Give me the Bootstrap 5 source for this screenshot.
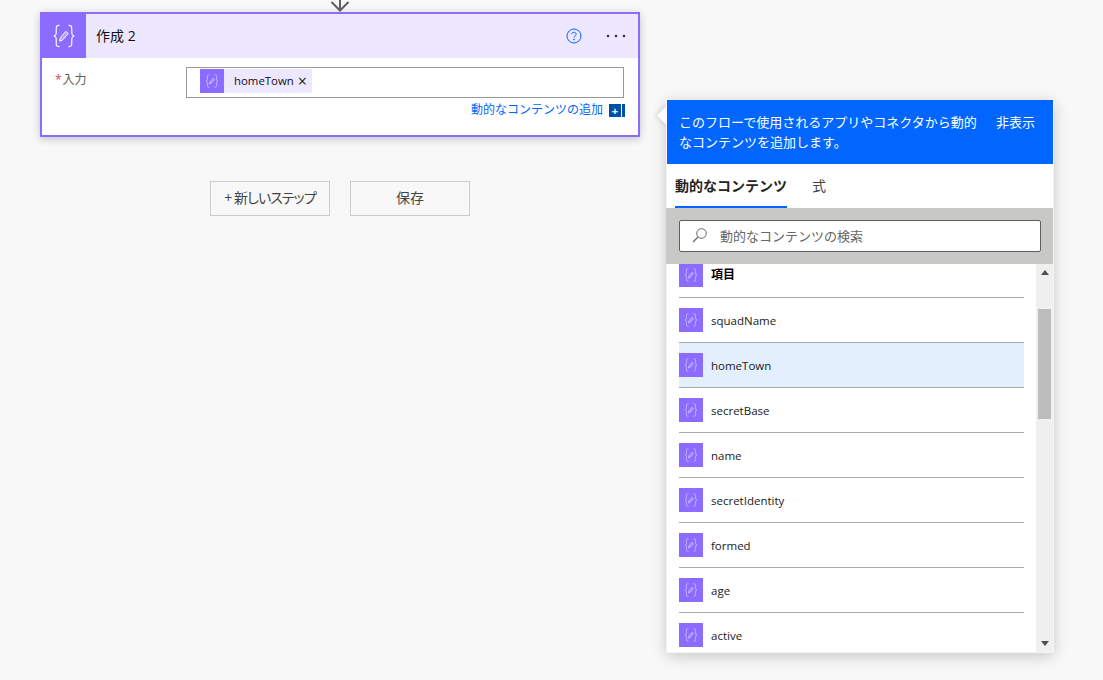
<!DOCTYPE html>
<html lang="ja"><head><meta charset="utf-8"><title>作成 2</title>
<link rel="stylesheet" href="https://cdn.jsdelivr.net/npm/bootstrap@5.3.0/dist/css/bootstrap.min.css">
<style>
html,body{height:680px;overflow:hidden}
body{background:#f8f8f8;font-family:"Open Sans","Noto Sans CJK JP",sans-serif;font-size:12px;color:#252423;position:relative}
.flow-col{width:600px;margin-left:40px}
.conn{height:12px;display:block;margin:0 auto}
.action-card{border:2px solid #8c6cff;background:#fff;height:125px;box-shadow:0 2px 8px rgba(0,0,0,.22)}
.action-head{height:44px;background:#ede7ff}
.head-icon{width:44px;height:44px;background:#8c6cff}
.head-title{font-size:14px;margin-left:10px;color:#111;padding-bottom:2px}
.help-ic{margin-right:24px;margin-top:-1px}
.dots{margin-right:12px;width:20px}
.act-body{padding:9px 14px 0 13px}
.lbl{width:131px;color:#605e5c;padding-top:4px;line-height:18px}
.lbl i{color:#e8414a;font-style:normal;margin-right:1px}
.tok-input{height:31px;border:1px solid #999;padding:1px 13px;flex:1}
.tok{height:24px;background:#ede7ff;width:112px}
.tok-ic{width:24px;height:24px;background:#8c6cff;flex:none}
.tok-txt{margin-left:10px;color:#111;font-size:11.4px;padding-bottom:1px}
.tok-x{margin-left:4px;font-size:16px;line-height:1;color:#222}
.add-row{margin-top:3px;margin-right:-1px;height:18px;color:#0066ff;line-height:18px}
.add-plus{width:12px;height:13px;background:#0050a8;color:#fff;margin-left:6px;font-size:11px;font-weight:700;line-height:13px;text-align:center}
.add-bar{width:3px;height:13px;background:#0050a8;margin-left:1px}
.step-row{margin-top:44px;gap:20px}
.step-btn{width:120px;height:35px;border:1px solid #ccc;border-radius:0;background:transparent;font-size:14px;color:#444;padding:0 0 2px}
.kana-tight{font-feature-settings:"palt";letter-spacing:-.95px}
.dyn-panel{position:absolute;left:666px;top:100px;width:388px;height:553px;background:#fff;border:1px solid #f4f4f4;border-top:0;box-shadow:0 3px 14px rgba(0,0,0,.2)}
.caret-tip{position:absolute;left:-7px;top:8px;width:15px;height:15px;background:#fff;transform:rotate(45deg);box-shadow:-2px 2px 4px rgba(0,0,0,.08)}
.info{position:relative;height:64px;background:#0066ff;color:#fff;font-size:13px;line-height:20px;padding:12px 17px 0 12px}
.info-txt{width:304px}
.info-hide{margin-left:13px;white-space:nowrap}
.tabbar{height:44px;padding-left:8px;gap:25px;font-size:14px}
.tab-on{width:112px;height:44px;line-height:43px;font-weight:600;border-bottom:2px solid #0066ff;white-space:nowrap;color:#252423}
.tab-off{line-height:43px;height:44px;color:#444}
.srch-band{height:56px;background:#c8c8c6;margin-left:-1px;padding:12px 12px 0 13px}
.srch{height:32px;border:1px solid #605e5c;border-radius:2px;background:#fff;color:#666;font-size:13px;padding-left:11px;gap:12px}
.srch span{padding-top:1px}
.list-wrap{height:389px;overflow:hidden}
.list-col{flex:1;padding-left:12px;padding-right:12px;overflow:hidden}
.dyn-row{height:45px;border-bottom:1px solid #aaa;gap:8px;color:#1a1a1a;font-size:11.5px}
.dyn-row span{padding-top:2px}
.dyn-row:first-child{margin-top:-11px}
.dyn-row.hl{background:#e3effd}
.dyn-row.strong{font-weight:700;color:#000;font-size:12px}
.dyn-row.strong span{padding-top:0}
.sb{width:17px;background:#f0f0f0;flex:none}
.sb-up,.sb-dn{height:17px}
.sb-thumb{width:13px;height:110px;background:#bdbdbd;margin:28px auto 0}
.sb-dn{margin-top:auto}
</style></head>
<body>
<svg width="0" height="0" class="d-block"><defs>
<g id="exprIcon" fill="none" stroke="#fff" stroke-linecap="round" stroke-linejoin="round">
<path d="M8.5 4.5C6.5 4.5 6.5 5.5 6.5 7.5V10C6.5 11 6 11.7 5 12C6 12.3 6.5 13 6.5 14V16.5C6.5 18.5 6.5 19.5 8.5 19.5" stroke-width=".8"/>
<path d="M15.5 4.5C17.5 4.5 17.5 5.5 17.5 7.5V10C17.5 11 18 11.7 19 12C18 12.3 17.5 13 17.5 14V16.5C17.5 18.5 17.5 19.5 15.5 19.5" stroke-width=".8"/>
<path d="M9.3 13.6L8.8 15.6L10.8 15L15 10.3L13.5 8.9Z" stroke-width=".7" fill="#fff" fill-opacity=".35"/>
</g></defs></svg>
<div class="flow-col">
<svg class="conn" width="24" height="12" viewBox="0 0 24 12"><path d="M12 0V10M3.5 2L12 10.5L20.5 2" fill="none" stroke="#605e5c" stroke-width="2"/></svg>
<div class="action-card">
 <div class="action-head d-flex align-items-center">
  <div class="head-icon d-flex align-items-center justify-content-center"><svg width="34" height="34" viewBox="0 0 24 24"><use href="#exprIcon"/></svg></div>
  <div class="head-title flex-grow-1">作成 2</div>
  <svg class="help-ic" width="16" height="16" viewBox="0 0 16 16"><circle cx="8" cy="8" r="7" fill="none" stroke="#0066ff"/><path d="M5.8 6.2C5.8 3.6 10.2 3.6 10.2 6.2C10.2 7.8 8 7.8 8 9.6" fill="none" stroke="#0066ff"/><circle cx="8" cy="11.6" r=".8" fill="#0066ff"/></svg>
  <svg class="dots" width="20" height="4" viewBox="0 0 20 4"><circle cx="2" cy="2" r="1.3" fill="#333"/><circle cx="10" cy="2" r="1.3" fill="#333"/><circle cx="18" cy="2" r="1.3" fill="#333"/></svg>
 </div>
 <div class="act-body">
  <div class="d-flex">
   <div class="lbl"><i>*</i>入力</div>
   <div class="tok-input d-flex"><div class="tok d-flex align-items-center">
    <div class="tok-ic d-flex align-items-center justify-content-center"><svg width="20" height="20" viewBox="0 0 24 24"><use href="#exprIcon" opacity=".75"/></svg></div>
    <span class="tok-txt">homeTown</span><span class="tok-x">×</span></div></div>
  </div>
  <div class="add-row d-flex justify-content-end align-items-center"><span>動的なコンテンツの追加</span><span class="add-plus">+</span><span class="add-bar"></span></div>
 </div>
</div>
<div class="step-row d-flex justify-content-center">
 <button class="btn step-btn kana-tight" type="button">+ 新しいステップ</button>
 <button class="btn step-btn" type="button">保存</button>
</div>
</div>

<div class="dyn-panel d-flex flex-column">
 <div class="caret-tip"></div>
 <div class="info d-flex"><div class="info-txt">このフローで使用されるアプリやコネクタから動的なコンテンツを追加します。</div><div class="info-hide">非表示</div></div>
 <div class="tabbar d-flex"><div class="tab-on">動的なコンテンツ</div><div class="tab-off">式</div></div>
 <div class="srch-band"><div class="srch d-flex align-items-center">
  <svg width="17" height="17" viewBox="0 0 17 17"><circle cx="10.5" cy="6.5" r="4.8" fill="none" stroke="#666"/><path d="M7 10L2 15" stroke="#666" stroke-width="1.2"/></svg>
  <span>動的なコンテンツの検索</span></div></div>
 <div class="list-wrap d-flex">
  <div class="list-col">
   <div class="dyn-row strong d-flex align-items-center"><div class="tok-ic d-flex align-items-center justify-content-center"><svg width="20" height="20" viewBox="0 0 24 24"><use href="#exprIcon" opacity=".7"/></svg></div><span>項目</span></div>
   <div class="dyn-row d-flex align-items-center"><div class="tok-ic d-flex align-items-center justify-content-center"><svg width="20" height="20" viewBox="0 0 24 24"><use href="#exprIcon" opacity=".7"/></svg></div><span>squadName</span></div>
   <div class="dyn-row hl d-flex align-items-center"><div class="tok-ic d-flex align-items-center justify-content-center"><svg width="20" height="20" viewBox="0 0 24 24"><use href="#exprIcon" opacity=".7"/></svg></div><span>homeTown</span></div>
   <div class="dyn-row d-flex align-items-center"><div class="tok-ic d-flex align-items-center justify-content-center"><svg width="20" height="20" viewBox="0 0 24 24"><use href="#exprIcon" opacity=".7"/></svg></div><span>secretBase</span></div>
   <div class="dyn-row d-flex align-items-center"><div class="tok-ic d-flex align-items-center justify-content-center"><svg width="20" height="20" viewBox="0 0 24 24"><use href="#exprIcon" opacity=".7"/></svg></div><span>name</span></div>
   <div class="dyn-row d-flex align-items-center"><div class="tok-ic d-flex align-items-center justify-content-center"><svg width="20" height="20" viewBox="0 0 24 24"><use href="#exprIcon" opacity=".7"/></svg></div><span>secretIdentity</span></div>
   <div class="dyn-row d-flex align-items-center"><div class="tok-ic d-flex align-items-center justify-content-center"><svg width="20" height="20" viewBox="0 0 24 24"><use href="#exprIcon" opacity=".7"/></svg></div><span>formed</span></div>
   <div class="dyn-row d-flex align-items-center"><div class="tok-ic d-flex align-items-center justify-content-center"><svg width="20" height="20" viewBox="0 0 24 24"><use href="#exprIcon" opacity=".7"/></svg></div><span>age</span></div>
   <div class="dyn-row d-flex align-items-center"><div class="tok-ic d-flex align-items-center justify-content-center"><svg width="20" height="20" viewBox="0 0 24 24"><use href="#exprIcon" opacity=".7"/></svg></div><span>active</span></div>
  </div>
  <div class="sb d-flex flex-column">
   <div class="sb-up d-flex align-items-center justify-content-center"><svg width="8" height="5" viewBox="0 0 8 5"><path d="M4 0L8 5H0Z" fill="#505050"/></svg></div>
   <div class="sb-thumb"></div>
   <div class="sb-dn d-flex align-items-center justify-content-center"><svg width="8" height="5" viewBox="0 0 8 5"><path d="M0 0H8L4 5Z" fill="#505050"/></svg></div>
  </div>
 </div>
</div>
<script src="https://cdn.jsdelivr.net/npm/bootstrap@5.3.0/dist/js/bootstrap.bundle.min.js"></script>
</body></html>
